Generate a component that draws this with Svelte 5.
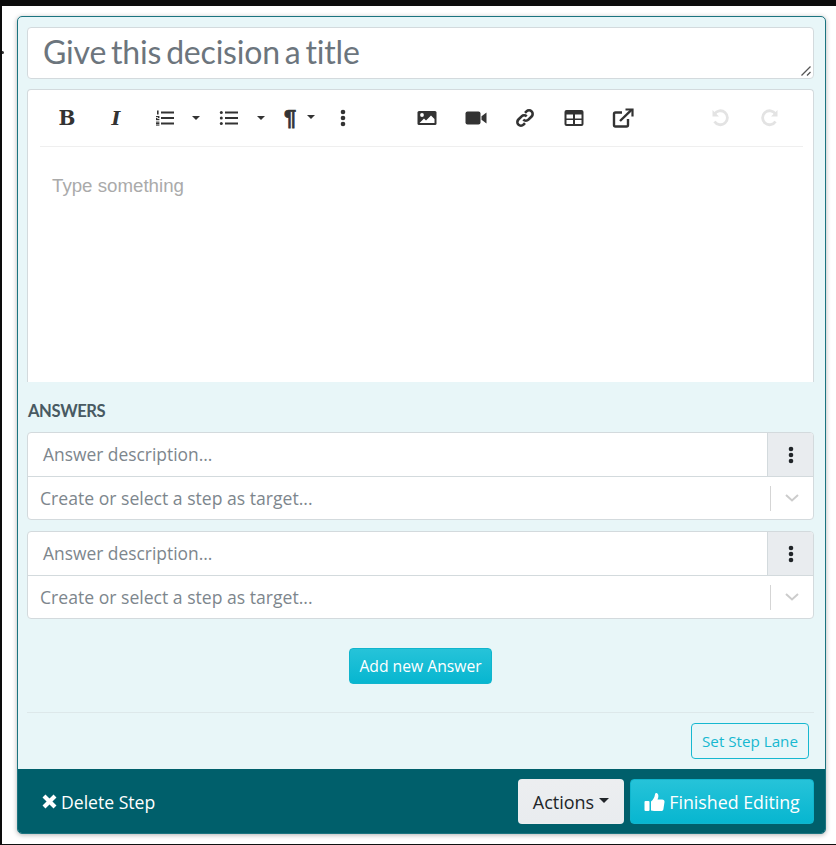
<script>
  const answers = [0, 1]
</script>

<div class="page">
  <span class="stray"></span>
  <div class="card">
    <div class="body">
      <div class="title-box">
        <span class="title">Give this decision a title</span>
        <svg class="grip" width="12" height="12" viewBox="0 0 12 12">
          <path d="M1.5 10.5 10.5 1.5M7 10.5 10.5 7" stroke="#555" stroke-width="1.3" fill="none" />
        </svg>
      </div>

      <div class="editor">
        <div class="toolbar">
          <div class="tool-group">
            <span class="tool letter b">B</span>
            <span class="tool letter i">I</span>
            <span class="tool list">
              <svg width="20" height="18" viewBox="0 0 20 18" fill="#333">
                <rect x="6" y="2.5" width="13" height="2" /><rect x="6" y="8" width="13" height="2" /><rect x="6" y="13.5" width="13" height="2" />
                <rect x="2" y="1.5" width="1.6" height="4" /><rect x="1" y="7" width="3.4" height="1.2" /><rect x="1" y="10" width="3.4" height="1.2" /><rect x="3" y="8" width="1.4" height="1.2" /><rect x="1" y="9" width="1.4" height="1.2" />
                <rect x="1" y="12.6" width="3.4" height="1.1" /><rect x="1" y="14" width="3.4" height="1.1" /><rect x="1" y="15.5" width="3.4" height="1.1" />
              </svg>
            </span>
            <span class="caret"></span>
            <span class="tool list ul">
              <svg width="20" height="18" viewBox="0 0 20 18" fill="#333">
                <rect x="6" y="2.5" width="13" height="2" /><rect x="6" y="8" width="13" height="2" /><rect x="6" y="13.5" width="13" height="2" />
                <circle cx="2.3" cy="3.5" r="1.5" /><circle cx="2.3" cy="9" r="1.5" /><circle cx="2.3" cy="14.5" r="1.5" />
              </svg>
            </span>
            <span class="caret second"></span>
            <span class="tool pilcrow">¶</span>
            <span class="caret near"></span>
            <span class="tool dots">
              <svg width="6" height="18" viewBox="0 0 6 18" fill="#333"><circle cx="3" cy="3" r="2.3" /><circle cx="3" cy="9" r="2.3" /><circle cx="3" cy="15" r="2.3" /></svg>
            </span>
          </div>

          <div class="tool-group insert">
            <svg width="20" height="16" viewBox="0 0 20 16"><rect x="0.5" y="1" width="19" height="14" rx="1.5" fill="#333" /><circle cx="5" cy="5" r="1.9" fill="#fff" /><path d="M2.5 13 7 8.500l2 2L14 5.500l3.500 3.500V13z" fill="#fff" /></svg>
            <svg width="22" height="16" viewBox="0 0 22 16" fill="#333"><rect x="0.5" y="1.5" width="15" height="13" rx="2" /><path d="M16.500 6.200 21.500 2.500v11l-5-3.700z" /></svg>
            <svg width="20" height="20" viewBox="0 0 20 20" fill="none" stroke="#333" stroke-width="2.6"><path d="M8.300 11.700a3.600 3.600 0 0 0 5.100 0l3.200-3.200a3.600 3.600 0 0 0-5.100-5.100l-1.500 1.500" /><path d="M11.700 8.300a3.600 3.600 0 0 0-5.100 0l-3.200 3.200a3.600 3.600 0 0 0 5.100 5.100l1.500-1.500" /></svg>
            <svg class="table-icon" width="20" height="18" viewBox="0 0 20 18"><rect x="0.5" y="1" width="19" height="16" rx="2" fill="#333" /><rect x="2.500" y="5.500" width="6.500" height="4" fill="#fff" /><rect x="11" y="5.500" width="6.500" height="4" fill="#fff" /><rect x="2.500" y="11" width="6.500" height="4" fill="#fff" /><rect x="11" y="11" width="6.500" height="4" fill="#fff" /></svg>
            <svg width="22" height="20" viewBox="0 0 22 20" fill="none" stroke="#333" stroke-width="2.400"><path d="M10 4.500H3.500a1.500 1.500 0 0 0-1.500 1.500v11a1.500 1.500 0 0 0 1.500 1.500h11a1.500 1.500 0 0 0 1.500-1.500v-6" /><path d="M8 13 19.500 1.800" /><path d="M13.500 1.500h7v7" stroke-width="2.200" /></svg>
          </div>

          <div class="tool-group history">
            <svg width="20" height="20" viewBox="0 0 20 20" fill="none" stroke="#e3e3e3" stroke-width="2.800"><path d="M4.500 13.500a7 7 0 1 0 0-7.500" /><path d="M2.500 2v6.500H9" fill="#e3e3e3" stroke="none" /></svg>
            <svg width="20" height="20" viewBox="0 0 20 20" fill="none" stroke="#e3e3e3" stroke-width="2.800"><path d="M15.500 13.500a7 7 0 1 1 0-7.500" /><path d="M17.500 2v6.500H11" fill="#e3e3e3" stroke="none" /></svg>
          </div>
        </div>
        <div class="content">Type something</div>
      </div>

      <div class="answers-label">ANSWERS</div>

      {#each answers as a (a)}
        <div class="answer">
          <div class="answer-top">
            <span class="answer-text">Answer description...</span>
            <span class="answer-menu">
              <svg width="6" height="18" viewBox="0 0 6 18" fill="#212529"><circle cx="3" cy="3" r="2.300" /><circle cx="3" cy="9" r="2.300" /><circle cx="3" cy="15" r="2.300" /></svg>
            </span>
          </div>
          <div class="answer-select">
            <span class="select-text">Create or select a step as target...</span>
            <span class="select-sep"></span>
            <svg class="chevron" width="14" height="8" viewBox="0 0 14 8" fill="none" stroke="#ccc" stroke-width="2"><path d="M1 1l6 5.500L13 1" /></svg>
          </div>
        </div>
      {/each}

      <div class="add-row">
        <button class="btn btn-info add">Add new Answer</button>
      </div>

      <hr />

      <div class="lane-row">
        <button class="lane">Set Step Lane</button>
      </div>
    </div>

    <div class="footer">
      <span class="delete">
        <svg width="15" height="15" viewBox="0 0 15 15" stroke="#fff" stroke-width="4.200"><path d="M2 2l11 11M13 2 2 13" /></svg>
        Delete Step
      </span>
      <div class="footer-btns">
        <button class="btn actions">Actions <span class="caret dark"></span></button>
        <button class="btn btn-info finished">
          <svg width="21" height="20" viewBox="0 0 21 20" fill="#fff">
            <rect x="0.5" y="9" width="5" height="10" rx="1" />
            <path d="M7 18.500V9.500c2-1.500 3.500-4 4-7 .1-1 .7-1.800 1.700-1.500 1.600.5 2 2.500 1.500 4.500L13.500 7.500h4.700c1.500 0 2.500 1 2.300 2.400l-1.100 7.300c-.2 1.100-1 1.800-2.200 1.800H10c-1.200 0-2-.2-3-.5z" />
          </svg>
          Finished Editing
        </button>
      </div>
    </div>
  </div>
</div>

<style>
  :global(body) {
    margin: 0;
    background: #fff;
  }
  .page {
    position: relative;
    box-sizing: border-box;
    height: 845px;
    width: 836px;
    border-top: 6px solid #0c0c0c;
    border-left: 2px solid #0c0c0c;
    border-bottom: 1px solid #111;
    padding: 10px 0 0 15px;
    font-family: "Open Sans", sans-serif;
    overflow: hidden;
  }
  .stray {
    position: absolute;
    left: -1px;
    top: 45px;
    width: 3px;
    height: 3px;
    border-radius: 50%;
    background: #333;
  }
  .card {
    box-sizing: border-box;
    width: 809px;
    height: 818px;
    display: flex;
    flex-direction: column;
    background: #e8f6f8;
    border: 1px solid #1b7480;
    border-radius: 5px;
    box-shadow: 0 1px 5px rgba(0, 0, 0, 0.3);
    overflow: hidden;
  }
  .body {
    flex: 1;
    padding: 10px 11px 0 9px;
    display: flex;
    flex-direction: column;
  }
  .title-box {
    box-sizing: border-box;
    position: relative;
    height: 52px;
    background: #fff;
    border: 1px solid #d3dadd;
    border-radius: 4px;
    padding: 0 15px 3px;
    display: flex;
    align-items: center;
  }
  .title {
    font-family: Lato, sans-serif;
    font-size: 32px;
    color: #6c757d;
    letter-spacing: -0.2px;
    word-spacing: -3px;
  }
  .grip {
    position: absolute;
    right: 1px;
    bottom: 1px;
  }
  .editor {
    box-sizing: border-box;
    margin-top: 10px;
    height: 293px;
    background: #fff;
    border: 1px solid #d3dadd;
    border-bottom: none;
    border-radius: 4px 4px 0 0;
    padding: 0 10px 0 12px;
  }
  .toolbar {
    height: 57px;
    border-bottom: 1px solid #efefef;
    display: flex;
    align-items: center;
    padding-left: 19px;
    box-sizing: border-box;
  }
  .tool-group {
    display: flex;
    align-items: center;
  }
  .tool {
    color: #333;
    display: inline-flex;
    align-items: center;
    justify-content: center;
  }
  .letter {
    font-family: "DejaVu Serif", serif;
    font-size: 20px;
    width: 16px;
  }
  .b {
    font-weight: 700;
  }
  .i {
    font-style: italic;
    margin-left: 33px;
    font-weight: 700;
    font-size: 19px;
  }
  .list {
    margin-left: 31px;
    width: 20px;
  }
  .ul {
    margin-left: 0;
  }
  .caret {
    display: inline-block;
    width: 0;
    height: 0;
    border-left: 4px solid transparent;
    border-right: 4px solid transparent;
    border-top: 4px solid #333;
    margin: 0 19px 0 17px;
  }
  .caret.second {
    margin: 0 17px 0 18px;
  }
  .caret.near {
    margin: 0 0 0 9px;
    transform: translateY(-1px);
  }
  .caret.dark {
    margin: 0 0 2px 0;
    vertical-align: middle;
    border-left-width: 5px;
    border-right-width: 5px;
    border-top-width: 5px;
    border-top-color: #212529;
  }
  .pilcrow {
    font-family: "Liberation Sans", sans-serif;
    font-weight: 700;
    font-size: 22px;
    width: 16px;
    -webkit-text-stroke: 0.7px #333;
  }
  .dots {
    margin-left: 25px;
  }
  .insert {
    margin-left: 71px;
    gap: 28px;
  }
  .table-icon {
    margin-left: 1px;
  }
  .history {
    margin-left: 76px;
    gap: 29.5px;
  }
  .content {
    padding: 28px 12px 0;
    margin-top: 0;
    color: #aaa;
    font-size: 18.7px;
    font-family: "Liberation Sans", sans-serif;
  }
  .answers-label {
    margin-top: 19px;
    margin-left: 1px;
    height: 20px;
    line-height: 20px;
    font-family: Lato, sans-serif;
    font-weight: 700;
    font-size: 16.6px;
    letter-spacing: -0.4px;
    color: #495a63;
  }
  .answer {
    box-sizing: border-box;
    margin-top: 11px;
    height: 88px;
    background: #fff;
    border: 1px solid #d3dadd;
    border-radius: 4px;
    overflow: hidden;
    color: #7d868d;
  }
  .answer-top {
    height: 43px;
    display: flex;
    border-bottom: 1px solid #d3dadd;
  }
  .answer-text {
    flex: 1;
    line-height: 42px;
    padding-left: 15px;
    font-size: 17.4px;
  }
  .answer-menu {
    width: 45px;
    background: #e9ecef;
    border-left: 1px solid #d3dadd;
    display: flex;
    align-items: center;
    justify-content: center;
  }
  .answer-select {
    height: 42px;
    display: flex;
    align-items: center;
    padding-left: 12px;
  }
  .select-text {
    flex: 1;
    font-size: 17.6px;
  }
  .select-sep {
    width: 1px;
    height: 25px;
    background: #d5d5d5;
  }
  .chevron {
    margin: 0 14px 0 14px;
  }
  .add-row {
    display: flex;
    justify-content: center;
    margin-top: 29px;
  }
  .btn {
    font-family: "Open Sans", sans-serif;
    border: 1px solid transparent;
    border-radius: 4px;
    box-sizing: border-box;
    cursor: pointer;
    display: inline-flex;
    align-items: center;
    justify-content: center;
  }
  .btn-info {
    color: #fff;
    background: linear-gradient(180deg, #26c3d9, #07b6d0);
    border-color: #10b5cd;
  }
  .add {
    width: 143px;
    height: 36px;
    font-size: 15.7px;
  }
  hr {
    border: none;
    height: 1px;
    background: #dde8ea;
    margin: 28px 0 0;
  }
  .lane-row {
    display: flex;
    justify-content: flex-end;
    margin-top: 10px;
    padding-right: 5px;
  }
  .lane {
    box-sizing: border-box;
    width: 118px;
    height: 36px;
    background: transparent;
    border: 1px solid #17b8d0;
    border-radius: 4px;
    color: #17b8d0;
    font-family: "Open Sans", sans-serif;
    font-size: 15.2px;
    padding: 0;
  }
  .footer {
    box-sizing: border-box;
    height: 64px;
    background: #005f6b;
    display: flex;
    align-items: center;
    justify-content: space-between;
    padding: 1px 11px 0 24px;
    flex-shrink: 0;
  }
  .delete {
    color: #fff;
    font-size: 17.6px;
    display: inline-flex;
    align-items: center;
    gap: 4px;
  }
  .footer-btns {
    display: flex;
    gap: 6px;
  }
  .actions {
    width: 106px;
    height: 45px;
    background: linear-gradient(180deg, #eceef0, #e9ecef);
    color: #212529;
    font-size: 18px;
    gap: 5px;
  }
  .finished {
    width: 184px;
    height: 45px;
    font-size: 17.8px;
    gap: 4px;
    padding: 0;
  }
</style>
